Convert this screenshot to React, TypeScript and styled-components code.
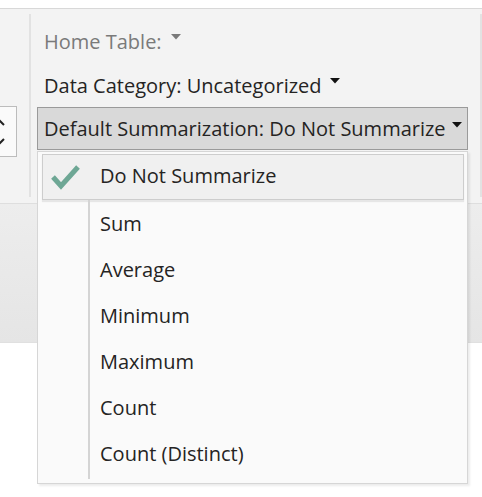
import * as React from 'react'
import styled, { createGlobalStyle } from 'styled-components'

const GlobalStyle = createGlobalStyle`
  html, body {
    margin: 0;
    padding: 0;
    background: #ffffff;
  }
  body {
    font-family: 'Segoe UI', 'Open Sans', sans-serif;
    color: #252423;
  }
`

const Page = styled.div`
  width: 482px;
  height: 497px;
  overflow: hidden;
  padding-top: 8px;
  box-sizing: border-box;
`

const Ribbon = styled.div`
  display: flex;
  height: 196px;
  box-sizing: border-box;
  background: #f3f3f3;
  border-top: 1px solid #d8d8d8;
  border-bottom: 1px solid #dedede;
`

const SpinGroup = styled.div`
  width: 29px;
  flex-shrink: 0;
  display: flex;
  justify-content: flex-end;
  align-items: flex-start;
  padding: 97px 12px 0 0;
  box-sizing: border-box;
  overflow: hidden;
`

const SpinBox = styled.div`
  width: 50px;
  height: 51px;
  flex-shrink: 0;
  box-sizing: border-box;
  background: #fafafa;
  border: 1px solid #bcbcbc;
  display: flex;
  align-items: center;
  justify-content: flex-end;
  padding-right: 11px;
`

const Separator = styled.div`
  width: 2px;
  flex-shrink: 0;
  margin: 5px 0 6px 0;
  background: #e2e2e2;
`

const PropGroup = styled.div`
  width: 449px;
  flex-shrink: 0;
  padding: 10px 0 0 6px;
  box-sizing: border-box;
  display: flex;
  flex-direction: column;
`

const PropRow = styled.div<{ $muted?: boolean }>`
  height: 44px;
  display: flex;
  align-items: center;
  padding-left: 7px;
  font-size: 20px;
  color: ${p => (p.$muted ? '#7a7a7a' : '#252423')};
  white-space: nowrap;
`

const DropWrap = styled.div`
  position: relative;
  width: 431px;
`

const DropButton = styled.div`
  height: 43px;
  box-sizing: border-box;
  display: flex;
  align-items: center;
  padding-left: 6px;
  background: #d9d9d9;
  border: 1px solid #9a9a9a;
  font-size: 20px;
  white-space: nowrap;
`

const Caret = styled.svg<{ $gap: number }>`
  margin-left: ${p => p.$gap}px;
  margin-bottom: 8px;
  flex-shrink: 0;
`

const Menu = styled.div`
  position: absolute;
  top: 44px;
  left: 0;
  width: 431px;
  height: 333px;
  box-sizing: border-box;
  padding: 2px 3px 0 4px;
  background: #fafafa;
  border: 1px solid #d6d6d6;
  box-shadow: 2px 2px 2px rgba(0, 0, 0, 0.08);
  display: flex;
  flex-direction: column;
  z-index: 2;
`

const MenuItem = styled.div<{ $selected?: boolean }>`
  height: 46px;
  flex-shrink: 0;
  display: flex;
  align-items: stretch;
  box-sizing: border-box;
  font-size: 20px;
  background: ${p => (p.$selected ? '#f0f0f0' : 'transparent')};
  border: ${p => (p.$selected ? '1px solid #cdcdcd' : 'none')};
  box-shadow: ${p => (p.$selected ? '0 2px 1px rgba(0,0,0,0.08)' : 'none')};
`

const IconCell = styled.div<{ $selected?: boolean }>`
  width: ${p => (p.$selected ? '47px' : '48px')};
  flex-shrink: 0;
  display: flex;
  align-items: center;
  padding-left: ${p => (p.$selected ? '8px' : '0')};
  box-sizing: border-box;
  border-right: ${p => (p.$selected ? '2px solid transparent' : '2px solid #d4d4d4')};
`

const ItemLabel = styled.div<{ $raise?: number }>`
  display: flex;
  align-items: center;
  padding-left: 10px;
  padding-bottom: ${p => p.$raise ?? 0}px;
  white-space: nowrap;
`

const MenuTail = styled.div`
  width: 48px;
  height: 3px;
  box-sizing: border-box;
  border-right: 2px solid #d4d4d4;
`

const Canvas = styled.div`
  height: 138px;
  background: linear-gradient(#ededed, #e5e5e5);
  border-bottom: 1px solid #e0e0e0;
`

const options = ['Sum', 'Average', 'Minimum', 'Maximum', 'Count', 'Count (Distinct)']

const CaretIcon = ({ color, gap }: { color: string; gap: number }) => (
  <Caret $gap={gap} width="10" height="6" viewBox="0 0 10 6">
    <polygon points="0,0 10,0 5,5.5" fill={color} />
  </Caret>
)

export default function App() {
  return (
    <Page>
      <GlobalStyle />
      <Ribbon>
        <SpinGroup>
          <SpinBox>
            <svg width="10" height="28" viewBox="0 0 10 28">
              <polyline points="1,7 5,3 9,7" fill="none" stroke="#222" strokeWidth="2" />
              <polyline points="1,21 5,25 9,21" fill="none" stroke="#222" strokeWidth="2" />
            </svg>
          </SpinBox>
        </SpinGroup>
        <Separator />
        <PropGroup>
          <PropRow $muted>
            Home Table:
            <CaretIcon color="#7a7a7a" gap={9} />
          </PropRow>
          <PropRow>
            Data Category: Uncategorized
            <CaretIcon color="#111" gap={8} />
          </PropRow>
          <DropWrap>
            <DropButton>
              Default Summarization: Do Not Summarize
              <CaretIcon color="#111" gap={6} />
            </DropButton>
            <Menu>
              <MenuItem $selected>
                <IconCell $selected>
                  <svg width="30" height="26" viewBox="0 0 30 26">
                    <polyline
                      points="2,13 10,22 27,3"
                      fill="none"
                      stroke="#6ea795"
                      strokeWidth="5"
                    />
                  </svg>
                </IconCell>
                <ItemLabel $raise={4}>Do Not Summarize</ItemLabel>
              </MenuItem>
              {options.map(o => (
                <MenuItem key={o}>
                  <IconCell />
                  <ItemLabel>{o}</ItemLabel>
                </MenuItem>
              ))}
              <MenuTail />
            </Menu>
          </DropWrap>
        </PropGroup>
        <Separator />
      </Ribbon>
      <Canvas />
    </Page>
  )
}
